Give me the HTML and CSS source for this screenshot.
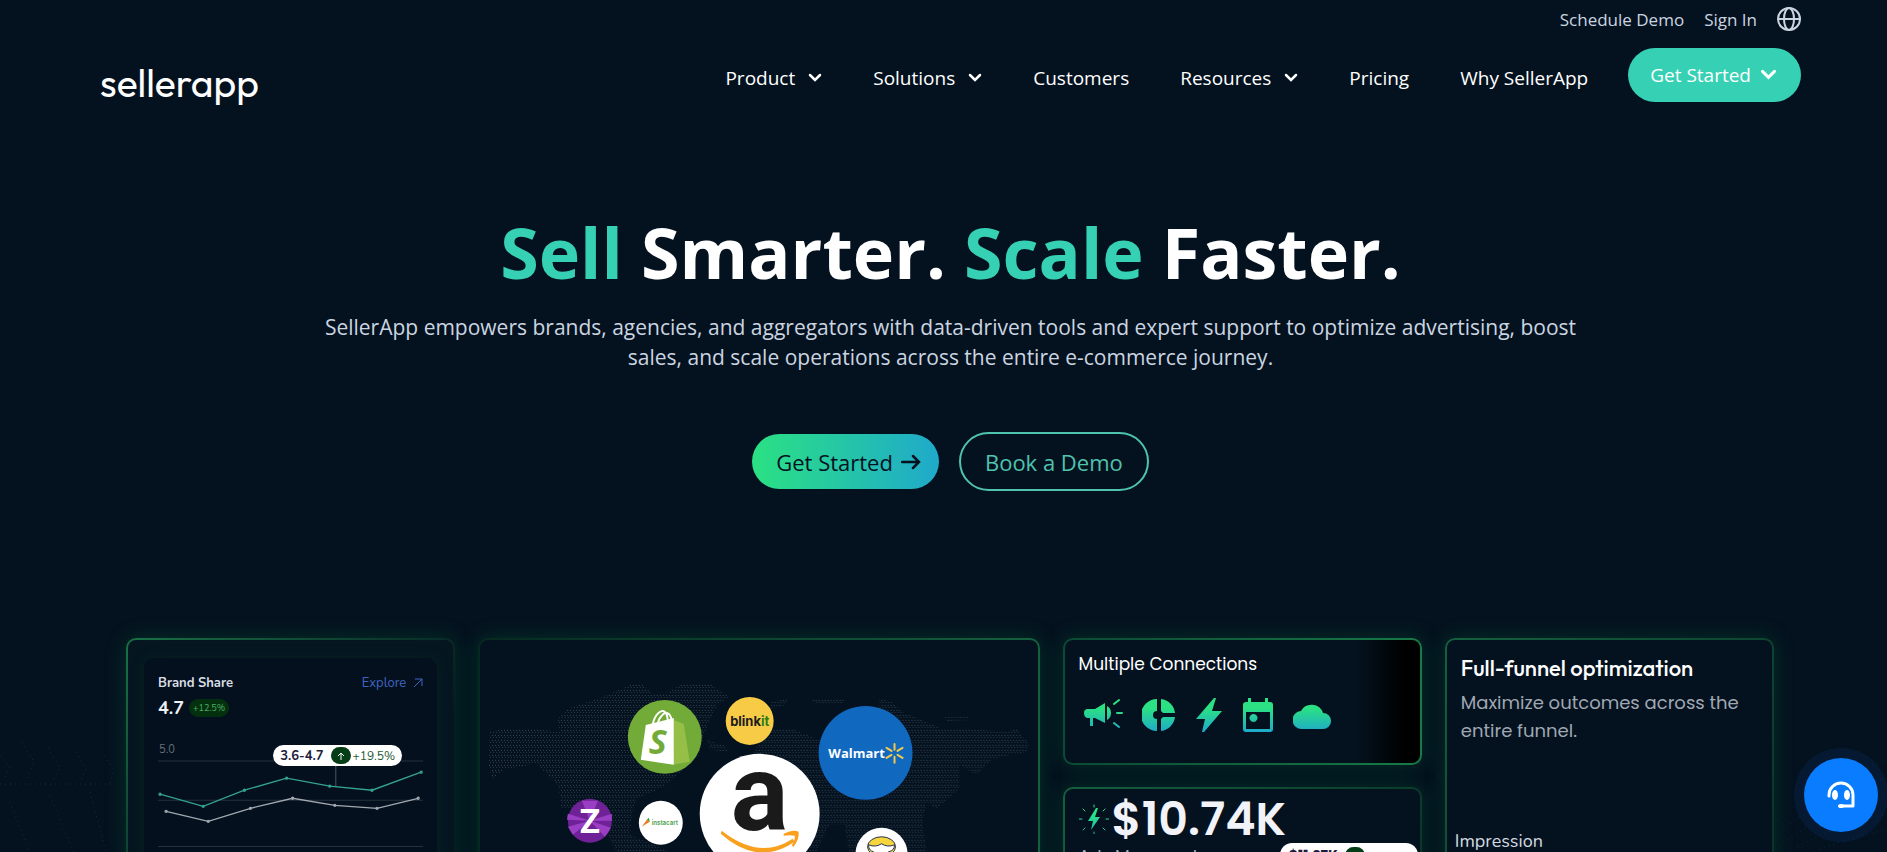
FILE: index.html
```html
<!DOCTYPE html>
<html lang="en">
  <head>
    <meta charset="utf-8">
    <meta name="viewport" content="width=device-width, initial-scale=1.0">
    <title>SellerApp</title>
    <link rel="stylesheet" href="styles.css">
  </head>
  <body>
    <div class="page">
      <svg class="waves waves-left" viewBox="0 0 126 140" aria-hidden="true">
        <path d="M0 44l10 10-6 14M22 30l12 20-8 18M48 36l12 20-8 14M76 40l10 18-6 12M104 44l10 14-6 16M0 72h120M10 90l20 50M50 84l24 56M90 80l16 60"/>
      </svg>
      <svg class="waves waves-right" viewBox="0 0 112 140" aria-hidden="true">
        <path d="M0 112Q40 70 112 48M0 124Q46 84 112 66M0 136Q52 98 112 84M14 140Q60 112 112 102M40 140Q74 124 112 118"/>
      </svg>

      <header class="header">
        <div class="topbar">
          <a href="#">Schedule Demo</a>
          <a href="#">Sign In</a>
          <button class="globe" type="button" aria-label="Language">
            <svg viewBox="0 0 24 24" width="24" height="24"><circle cx="12" cy="12" r="11"/><ellipse cx="12" cy="12" rx="5" ry="11"/><path d="M1 12h22"/></svg>
          </button>
        </div>
        <div class="navbar">
          <a class="logo" href="#">sellerapp</a>
          <nav class="nav">
            <button type="button">Product <svg class="chevron" viewBox="0 0 14 10"><path d="M2 2l5 5 5-5"/></svg></button>
            <button type="button">Solutions <svg class="chevron" viewBox="0 0 14 10"><path d="M2 2l5 5 5-5"/></svg></button>
            <a href="#">Customers</a>
            <button type="button">Resources <svg class="chevron" viewBox="0 0 14 10"><path d="M2 2l5 5 5-5"/></svg></button>
            <a href="#">Pricing</a>
            <a href="#">Why SellerApp</a>
          </nav>
          <button class="nav-cta" type="button">Get Started <svg class="chevron" viewBox="0 0 14 10"><path d="M2 2l5 5 5-5"/></svg></button>
        </div>
      </header>

      <main>
        <section class="hero">
          <h1><span>Sell</span> Smarter. <span>Scale</span> Faster.</h1>
          <p>SellerApp empowers brands, agencies, and aggregators with data-driven tools and expert support to optimize advertising, boost sales, and scale operations across the entire e-commerce journey.</p>
          <div class="actions">
            <a class="btn btn-primary" href="#">Get Started
              <svg viewBox="0 0 20 16" width="20" height="16"><path d="M1 8h17M12 2l6 6-6 6"/></svg>
            </a>
            <a class="btn btn-outline" href="#">Book a Demo</a>
          </div>
        </section>

        <section class="cards">
          <div class="card card-share">
            <div class="panel">
              <div class="panel-head">
                <h3>Brand Share</h3>
                <a href="#">Explore
                  <svg viewBox="0 0 10 10" width="10" height="10"><path d="M1 9l8-8M2 1h7v7"/></svg>
                </a>
              </div>
              <div class="score"><strong>4.7</strong><span class="badge">+12.5%</span></div>
              <div class="chart">
                <svg viewBox="0 0 264 150">
                  <text x="1" y="13">5.0</text>
                  <path class="grid-line" d="M0 21h264M0 60h264M0 106h264"/>
                  <path class="marker" d="M177 26v20"/>
                  <g class="line-a">
                    <polyline points="2,54 45,66 86,50 128,38 171,46 213,50 262,32"/>
                    <circle cx="2" cy="54" r="1"/><circle cx="45" cy="66" r="1"/><circle cx="86" cy="50" r="1"/><circle cx="128" cy="38" r="1"/><circle cx="171" cy="46" r="1"/><circle cx="213" cy="50" r="1"/><circle cx="262" cy="32" r="1"/>
                  </g>
                  <g class="line-b">
                    <polyline points="8,71 50,81 92,68 134,58 176,65 218,68 259,58"/>
                    <circle cx="8" cy="71" r="1"/><circle cx="50" cy="81" r="1"/><circle cx="92" cy="68" r="1"/><circle cx="134" cy="58" r="1"/><circle cx="176" cy="65" r="1"/><circle cx="218" cy="68" r="1"/><circle cx="259" cy="58" r="1"/>
                  </g>
                </svg>
                <div class="tooltip">
                  <strong>3.6-4.7</strong>
                  <span class="up"><svg viewBox="0 0 8 8" width="8" height="8"><path d="M4 8V1M1 4l3-3 3 3"/></svg></span>
                  <span>+19.5%</span>
                </div>
              </div>
            </div>
          </div>

          <div class="card card-map">
            <svg viewBox="0 0 558 320">
              <defs>
                <pattern id="dots" width="3" height="5" patternUnits="userSpaceOnUse">
                  <rect width="1" height="1" fill="#3b4754"/>
                  <rect x="1" y="2" width="1" height="1" fill="#303c49"/>
                </pattern>
              </defs>
              <g fill="url(#dots)">
                <path d="M10 92l13-3h34l23 3-2-13 9-10 36-12 27-12 13-1 9 10h15l13-9 30-1 20 13-13 8-13 30-4 20-33 30-14 7-16 7-5 16-2 20 25 10 18 9 10 30-50-4-14-24-10-17-12-25-28-6h-8l-2-22-10-10-13-12-30 5-14 10-3-13z"/>
                <path d="M228 100l18 6 2 6-18-2zM290 62l18-3-2 6-14 3zM330 58l18 2 18-1-4 5-26-1zM465 77l24-1 2 4-24 1z"/>
                <path d="M400 59l13 3 10 10 17 7 23 10h30l34 3 10-3 13 15-3 8-34 7-16 16-17-10v24l-23 20-10-7-4 20 4 30-17 18-10-30-50 15-5-30h-15l-20 40-60 15-10-90 15-40 15-20 23-1 27 11 20-25 40-3z"/>
              </g>

              <g transform="translate(185 97)">
                <circle r="37" fill="#73ab39"/>
                <path d="M9-17l10 4 6 38-17 3z" fill="#95bf47"/>
                <path d="M-19-12L9-19v47l-33-5z" fill="#fff"/>
                <path d="M-12-13c2-9 8-15 12-12 3 2 3 7 3 11M-7-14c2-7 7-12 11-9 2 2 3 5 3 9" fill="none" stroke="#fff" stroke-width="2"/>
                <text class="shopify" x="-7" y="17">S</text>
              </g>
              <g transform="translate(270 81)">
                <circle r="24" fill="#f8cb46"/>
                <text class="blinkit" y="5">blink<tspan fill="#2d7d16">it</tspan></text>
              </g>
              <g transform="translate(386 113)">
                <circle r="47" fill="#1068bf"/>
                <text class="walmart" x="-9" y="5">Walmart</text>
                <path d="M29-9v6M29 4v6M21-5l5 3M32 2l5 3M37-5l-5 3M26 2l-5 3" stroke="#f2c94c" stroke-width="2" stroke-linecap="round"/>
              </g>
              <g transform="translate(110 181)">
                <circle r="22" fill="#6f2297"/>
                <path d="M0 0l-22-7-1 6zM0 0l-22 6 5 8zM0 0l22-7v7zM0 0l21 7-6 9zM-8-20l8 20 8-20z" fill="#9a3fc4"/>
                <text class="zepto" y="12">Z</text>
              </g>
              <g transform="translate(181 183)">
                <circle r="22" fill="#fff"/>
                <path d="M-19 4l5-7 3 2z" fill="#f07c22"/>
                <path d="M-14-3l2-2 1 4z" fill="#3a9a3a"/>
                <text class="instacart" x="4" y="2">instacart</text>
              </g>
              <g transform="translate(280 174)">
                <circle r="60" fill="#fff"/>
                <text class="amazon" y="16">a</text>
                <path d="M-38 17Q0 47 33 25l2 3Q-2 53-39 20z" fill="#f9a11e"/>
                <path d="M24 20q10-5 15-2 1 7-5 15l-2-1q4-7 3-10-4-1-11 0z" fill="#f9a11e"/>
              </g>
              <g transform="translate(402 214)">
                <circle r="26" fill="#fff"/>
                <ellipse cy="-7" rx="14" ry="10" fill="#f5d63d" stroke="#26304f"/>
                <path d="M-13-9q7 3 13-1 6 4 13 1 0 6-6 7-4 5-7 3-6 3-8-3-5-1-5-7z" fill="#fff" stroke="#26304f"/>
              </g>
            </svg>
          </div>

          <div class="stack">
            <div class="card card-connections">
              <h3>Multiple Connections</h3>
              <div class="icons">
                <svg viewBox="0 0 40 34" width="40" height="34">
                  <defs>
                    <linearGradient id="mint" gradientUnits="userSpaceOnUse" x1="0" y1="0" x2="0" y2="34"><stop offset="0.3" stop-color="#2be183"/><stop offset="1" stop-color="#1fa9cb"/></linearGradient>
                  </defs>
                  <path fill="url(#mint)" d="M5 11h7l10-6v20l-10-5H10v8H7v-8H4q-3-1-3-5 0-4 4-4zM24 8q4 2 4 7t-4 7z"/>
                  <path fill="none" stroke="url(#mint)" stroke-width="2" stroke-linecap="round" d="M31 6l5-4M34 15.1l5-.1M31 25l5 4"/>
                </svg>
                <svg viewBox="0 0 34 34" width="34" height="34">
                  <path fill="url(#mint)" d="M15 1v12a4 4 0 0 0 0 8v12A16 16 0 0 1 15 1zM19 1a16 16 0 0 1 14 14H21l-2-2zM21 19h12a16 16 0 0 1-14 14V21z"/>
                </svg>
                <svg viewBox="0 0 28 34" width="28" height="34">
                  <path fill="url(#mint)" d="M19 0L1 21h9L7 34h2l18-21H17l4-13z"/>
                </svg>
                <svg viewBox="0 0 32 34" width="32" height="34">
                  <path fill="url(#mint)" fill-rule="evenodd" d="M6 0h3v4h14V0h3v4h2q3 0 3 3v24q0 3-3 3H4q-3 0-3-3V7q0-3 3-3h2zM4 14v17h24V14zM12 16a4 4 0 1 1-1 0z"/>
                </svg>
                <svg viewBox="0 0 38 34" width="38" height="34">
                  <path fill="url(#mint)" d="M9 31a9 9 0 0 1-1-18 12 12 0 0 1 22 2 8 8 0 0 1 0 16z"/>
                </svg>
              </div>
            </div>
            <div class="card card-ads">
              <div class="amount">
                <svg viewBox="0 0 30 30" width="30" height="30">
                  <path fill="url(#mint)" d="M17 4L9 17h5l-2 9 9-13h-5l3-9z"/>
                  <path fill="none" stroke="url(#mint)" stroke-width="1" stroke-linecap="round" d="M15 1l.1 2M15 28l.1 2M0 15l3 .1M27 15l3 .1M4 5l2 2M24 24l2 2M26 5l-2 2M6 24l-2 2"/>
                </svg>
                <strong>$10.74K</strong>
              </div>
              <div class="managed">
                <span>Ads Managed</span>
                <div class="pill"><strong>$11.27K</strong><span class="up"></span></div>
              </div>
            </div>
          </div>

          <div class="card card-funnel">
            <h2>Full-funnel optimization</h2>
            <p>Maximize outcomes across the entire funnel.</p>
            <div class="metric">Impression</div>
          </div>
        </section>
      </main>

      <button class="chat" type="button" aria-label="Chat with support">
        <svg viewBox="0 0 28 28" width="28" height="28">
          <path d="M2 15v-1a12 12 0 0 1 24 0v11H15"/>
          <ellipse cx="8" cy="14" rx="3" ry="5"/><ellipse cx="20" cy="14" rx="3" ry="5"/><ellipse cx="14" cy="25" rx="3" ry="2"/>
        </svg>
      </button>
    </div>
  </body>
</html>
```
FILE: styles.css
```css
* {
  box-sizing: border-box;
}
body {
  margin: 0;
  background: #04121f;
  color: #fff;
  font-family: "Segoe UI", "Open Sans", "Noto Sans", sans-serif;
}
h1, h2, h3, p {
  margin: 0;
}
a {
  color: inherit;
  text-decoration: none;
}
button {
  font: inherit;
  color: inherit;
  background: none;
  border: none;
  padding: 0;
  cursor: pointer;
}
.page {
  position: relative;
  height: 100vh;
  overflow: hidden;
}

/* header */
.header {
  padding: 6px 86px 0 100px;
}
.topbar {
  display: flex;
  justify-content: flex-end;
  align-items: center;
  gap: 20px;
  height: 26px;
  font-size: 17px;
  color: #cbd5e1;
}
.globe {
  display: flex;
}
.globe svg {
  fill: none;
  stroke: #cbd5e1;
  stroke-width: 2;
}
.navbar {
  display: flex;
  align-items: center;
  margin-top: 16px;
}
.logo {
  font-family: Outfit, Lato, sans-serif;
  font-size: 39px;
  line-height: 54px;
  padding-top: 8px;
  margin-bottom: -8px;
}
.nav {
  display: flex;
  align-items: center;
  gap: 51px;
  margin-left: auto;
  padding-top: 6px;
  font-size: 19px;
}
.nav button, .nav-cta {
  display: flex;
  align-items: center;
  gap: 13px;
}
.chevron {
  width: 14px;
  height: 10px;
  fill: none;
  stroke: #fff;
  stroke-width: 2.5;
  stroke-linecap: round;
}
.nav-cta {
  height: 54px;
  margin-left: 40px;
  padding: 0 24px 0 22px;
  gap: 9px;
  border-radius: 27px;
  background: #36d1b4;
  font-size: 19px;
}
.nav-cta .chevron {
  width: 17px;
  height: 12px;
}

/* hero */
.hero {
  padding: 102px 86px 0 100px;
  text-align: center;
}
.hero h1 {
  font-size: 70px;
  line-height: 96px;
}
.hero h1 span {
  color: #36d1b4;
}
.hero p {
  max-width: 1290px;
  margin: 12px auto 0;
  font-size: 21px;
  line-height: 30px;
  color: #cbd5e1;
}
.actions {
  display: flex;
  justify-content: center;
  align-items: center;
  gap: 20px;
  margin-top: 60px;
}
.btn {
  display: flex;
  align-items: center;
  gap: 8px;
  height: 55px;
  padding: 0 18px 0 24px;
  border-radius: 30px;
  font-size: 22px;
  font-weight: 500;
}
.btn-primary {
  color: #04121f;
  background: linear-gradient(90deg, #2be183, #1fa9cb);
}
.btn-primary svg {
  fill: none;
  stroke: #04121f;
  stroke-width: 2.5;
  stroke-linecap: round;
}
.btn-outline {
  height: 59px;
  padding: 0 24px;
  border: 2px solid #4fc3ae;
  color: #4fc3ae;
}

/* cards */
.cards {
  display: grid;
  grid-template-columns: 329fr 561fr 359fr 329fr;
  gap: 23px;
  padding: 147px 113px 0 126px;
}
.card {
  border: 2px solid transparent;
  border-radius: 10px;
  background:
    linear-gradient(#04121f, #04121f) padding-box,
    linear-gradient(135deg, #14603f, #06291f) border-box;
  box-shadow: 0 0 20px rgba(0, 110, 55, 0.35);
}
.card-share {
  padding: 18px 16px;
  background:
    linear-gradient(#051621, #051621) padding-box,
    linear-gradient(135deg, #197246, #051a20 60%) border-box;
  font-family: Nunito, Lato, sans-serif;
}
.panel {
  min-height: 300px;
  padding: 14px;
  border-radius: 10px;
  background: #04101d;
  box-shadow: 0 0 12px #07231f;
}
.panel-head {
  display: flex;
  justify-content: space-between;
  align-items: center;
  height: 22px;
}
.panel-head h3 {
  font-size: 13px;
  color: #d9dee6;
}
.panel-head a {
  display: flex;
  align-items: center;
  gap: 7px;
  font-size: 13px;
  color: #3f66c4;
}
.panel-head svg {
  fill: none;
  stroke: #3f66c4;
}
.score {
  display: flex;
  align-items: center;
  gap: 5px;
  height: 28px;
}
.score strong {
  font-size: 18px;
  color: #eef1f5;
}
.badge {
  padding: 0 4px;
  border-radius: 9px;
  background: #05300f;
  color: #4cb163;
  font-size: 9px;
  line-height: 18px;
}
.chart {
  position: relative;
  margin-top: 18px;
}
.chart > svg {
  display: block;
  width: 100%;
}
.chart text {
  font-size: 11px;
  fill: #66707c;
}
.grid-line {
  stroke: #25303b;
}
.marker {
  stroke: #4b5661;
}
.line-a, .line-b {
  fill: none;
  stroke: #35a392;
  stroke-width: 1.3;
}
.line-b {
  stroke: #a3a9b1;
}
.tooltip {
  position: absolute;
  top: 5px;
  right: 21px;
  display: flex;
  align-items: center;
  gap: 2px;
  height: 21px;
  padding: 0 7px;
  border-radius: 11px;
  background: #fff;
  color: #1f5a35;
  font-size: 12px;
}
.tooltip strong {
  margin-right: 5px;
  font-size: 13px;
  color: #211a3c;
}
.up {
  display: flex;
  align-items: center;
  justify-content: center;
  width: 20px;
  height: 17px;
  border-radius: 9px;
  background: #053d16;
}
.up svg {
  fill: none;
  stroke: #fff;
}

.card-map {
  background:
    linear-gradient(#04121f, #04121f) padding-box,
    linear-gradient(90deg, #06291f, #14603f) border-box;
}
.card-map svg {
  display: block;
  width: 100%;
}
.card-map text {
  text-anchor: middle;
  font-weight: 700;
}
.shopify {
  font-size: 34px;
  font-style: italic;
  fill: #73ab39;
}
.blinkit {
  font-family: Inter, sans-serif;
  font-size: 13px;
  fill: #1c1c1c;
}
.walmart {
  font-size: 13px;
  fill: #fff;
}
.zepto {
  font-family: Inter, sans-serif;
  font-size: 33px;
  fill: #fff;
}
.instacart {
  font-family: Inter, sans-serif;
  font-size: 6px;
  fill: #5aa85a;
}
.amazon {
  font-family: Roboto, sans-serif;
  font-size: 108px;
  fill: #1a1a1a;
}

.stack {
  display: flex;
  flex-direction: column;
  gap: 22px;
}
.stack .card {
  font-family: Poppins, Inter, sans-serif;
}
.card-connections {
  height: 127px;
  padding: 12px 14px;
  background:
    linear-gradient(90deg, #04121f 82%, #000 96%) padding-box,
    linear-gradient(90deg, #0b4a34, #177a47) border-box;
}
.card-connections h3 {
  font-size: 17px;
  font-weight: 400;
  line-height: 24px;
}
.icons {
  display: flex;
  gap: 19px;
  margin-top: 22px;
  padding-left: 4px;
}
.card-ads {
  flex: 1;
  padding: 6px 2px 0 14px;
}
.amount {
  display: flex;
  align-items: center;
  gap: 3px;
  height: 48px;
}
.amount strong {
  font-size: 46px;
  font-weight: 600;
  line-height: 48px;
  color: #f1f3f8;
}
.managed {
  display: flex;
  justify-content: space-between;
  font-size: 17px;
  line-height: 28px;
  color: #a8b0ba;
}
.pill {
  display: flex;
  align-items: center;
  gap: 7px;
  width: 138px;
  height: 24px;
  padding-left: 9px;
  border-radius: 12px;
  background: #fff;
  color: #211a3c;
  font-size: 14px;
}

.card-funnel {
  padding: 14px;
}
.card-funnel h2 {
  font-family: Outfit, Lato, sans-serif;
  font-size: 22px;
  font-weight: 500;
  line-height: 28px;
}
.card-funnel p {
  margin-top: 7px;
  font-family: Poppins, Inter, sans-serif;
  font-size: 18px;
  line-height: 28px;
  color: #a0a8b4;
}
.metric {
  margin-top: 84px;
  margin-left: -6px;
  font-family: Nunito, Lato, sans-serif;
  font-size: 18px;
  line-height: 24px;
  color: #d5dae1;
}

/* faint dotted waves beside the cards */
.waves {
  position: absolute;
  bottom: 0;
  fill: none;
  stroke: #0d2c44;
  stroke-dasharray: 1 4;
}
.waves-left {
  left: 0;
  width: 126px;
}
.waves-right {
  right: 0;
  width: 112px;
}

.chat {
  position: fixed;
  right: 9px;
  bottom: 20px;
  display: flex;
  align-items: center;
  justify-content: center;
  width: 74px;
  height: 74px;
  border-radius: 50%;
  background: #0a7cff;
  box-shadow: 0 0 0 10px rgba(10, 60, 130, 0.2);
}
.chat svg {
  fill: #fff;
}
.chat path {
  fill: none;
  stroke: #fff;
  stroke-width: 3;
  stroke-linejoin: round;
  stroke-linecap: round;
}
```
